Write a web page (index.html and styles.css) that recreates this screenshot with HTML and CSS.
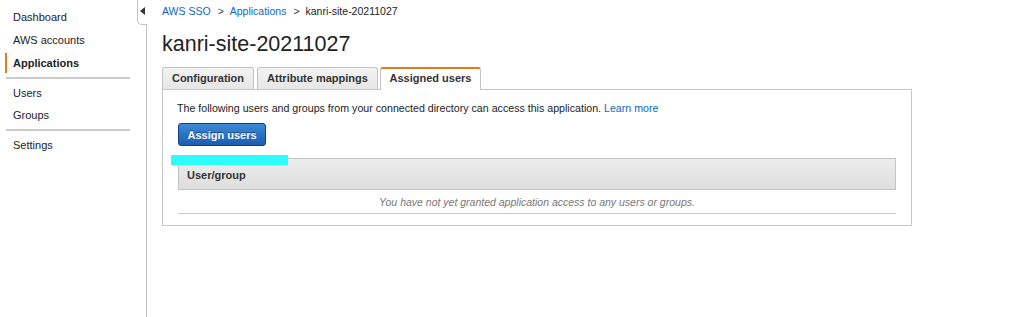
FILE: index.html
```html
<!DOCTYPE html>
<html>
<head>
<meta charset="utf-8">
<link rel="stylesheet" href="styles.css">
</head>
<body>
<div class="layout">
  <nav class="sidebar">
    <a class="nav-item">Dashboard</a>
    <a class="nav-item">AWS accounts</a>
    <a class="nav-item active">Applications</a>
    <div class="sep"></div>
    <a class="nav-item">Users</a>
    <a class="nav-item">Groups</a>
    <div class="sep"></div>
    <a class="nav-item">Settings</a>
  </nav>
  <div class="rail">
    <div class="toggle"><svg width="5" height="8" viewBox="0 0 5 8"><path d="M5 0 L0 4 L5 8 Z" fill="#333"/></svg></div>
  </div>
  <main class="main">
    <div class="crumbs"><a>AWS SSO</a><span class="gt">&gt;</span><a>Applications</a><span class="gt">&gt;</span><span class="cur">kanri-site-20211027</span></div>
    <h1 class="title">kanri-site-20211027</h1>
    <div class="tabs">
      <div class="tab t1">Configuration</div>
      <div class="tab t2">Attribute mappings</div>
      <div class="tab t3 active">Assigned users</div>
    </div>
    <section class="panel">
      <p class="intro">The following users and groups from your connected directory can access this application. <a>Learn more</a></p>
      <button class="btn">Assign users</button>
      <div class="redact"></div>
      <div class="thead">User/group</div>
      <div class="empty">You have not yet granted application access to any users or groups.</div>
    </section>
  </main>
</div>
</body>
</html>
```

FILE: styles.css
```css
* { box-sizing: border-box; }
html, body { margin: 0; padding: 0; background: #fff; }
body { font-family: "Liberation Sans", Arial, sans-serif; color: #222; width: 1036px; height: 317px; overflow: hidden; }
.layout { display: flex; height: 317px; }
.sidebar { width: 137px; padding-top: 6px; display: flex; flex-direction: column; flex: none; }
.nav-item { display: block; height: 23px; line-height: 23px; font-size: 11px; padding-left: 13px; color: #222; }
.sep ~ .nav-item { height: 22px; line-height: 22px; }
.nav-item.active { font-weight: bold; border-left: 2px solid #e07b18; margin-left: 5px; padding-left: 6px; height: 20px; line-height: 20px; margin-top: 1px; margin-bottom: 2px; }
.sep { height: 2px; background: #cbcbcb; margin: 2px 7px 3px 6px; }
.sep + .nav-item + .nav-item + .sep { margin-top: 3px; }
.rail { width: 10px; flex: none; position: relative; }
.toggle { width: 10px; height: 25px; border: 1px solid #c3c3c3; border-right: none; border-top: none; border-radius: 0 0 0 5px; display: flex; align-items: center; justify-content: flex-end; padding-right: 2px; padding-bottom: 3px; }
.rail::after { content: ""; display: block; position: absolute; left: 9px; top: 24px; bottom: 0; width: 1px; background: #c3c3c3; }
.main { flex: 1; padding-left: 15px; }
.crumbs { font-size: 10.5px; height: 22px; line-height: 22px; color: #222; }
.crumbs a { color: #1166bb; }
.crumbs .gt { margin: 0 6px 0 7px; color: #444; }
.title { font-size: 21.5px; font-weight: normal; margin: 0; height: 45px; line-height: 45px; color: #222; }
.tabs { display: flex; height: 22px; }
.tab { height: 22px; font-size: 11px; font-weight: bold; line-height: 21px; text-align: center; background: linear-gradient(#f3f3f3, #e6e6e6); border: 1px solid #c3c3c3; border-bottom: none; border-radius: 3px 3px 0 0; color: #333; margin-right: 3px; }
.t1 { width: 92px; }
.t2 { width: 121px; margin-right: 2px; }
.t3 { width: 101px; }
.tab.active { background: #fff; border-top: 2px solid #e07b18; line-height: 19px; height: 23px; position: relative; z-index: 1; }
.panel { width: 750px; border: 1px solid #c6c6c6; padding: 11px 15px 11px 15px; position: relative; }
.intro { margin: 0; font-size: 10.65px; line-height: 15px; color: #222; margin-left: -1px; }
.intro a { color: #1166bb; }
.btn { margin-top: 7px; margin-left: 0; width: 88px; height: 23px; font-family: inherit; font-size: 11px; font-weight: bold; color: #fff; border: 1px solid #12407e; border-radius: 3px; background: linear-gradient(#3c8ad8, #1b5cb0); text-shadow: 0 -1px 0 #163f78; padding: 0; display: block; }
.redact { position: absolute; left: 8px; top: 65px; width: 117px; height: 10px; background: #2cfcfc; z-index: 2; }
.thead { margin-top: 12px; width: 718px; height: 32px; line-height: 32px; border: 1px solid #c3c3c3; background: linear-gradient(#ececec, #dedede); font-size: 11px; font-weight: bold; padding-left: 8px; color: #333; }
.empty { width: 718px; height: 24px; line-height: 25px; text-align: center; font-size: 10.5px; font-style: italic; color: #777; border-bottom: 1px solid #c8c8c8; }
```
